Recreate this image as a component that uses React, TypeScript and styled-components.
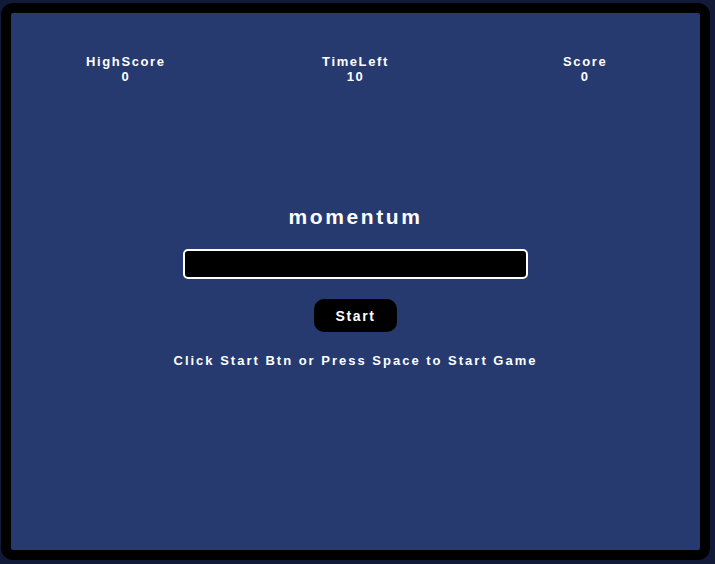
import React from "react";
import styled, { createGlobalStyle } from "styled-components";

const Global = createGlobalStyle`
  html, body {
    margin: 0;
    padding: 0;
    background: #111a38;
    height: 100%;
  }
  #root {
    height: 100%;
  }
`;

const Page = styled.div`
  box-sizing: border-box;
  height: 564px;
  padding: 3px 5px 4px 1px;
  font-family: "Liberation Sans", Arial, sans-serif;
  font-weight: bold;
  color: #ffffff;
`;

const Frame = styled.div`
  box-sizing: border-box;
  height: 100%;
  border: 10px solid #000000;
  border-radius: 12px;
  background: #263a70;
  display: flex;
  flex-direction: column;
`;

const Stats = styled.div`
  display: grid;
  grid-template-columns: repeat(3, 1fr);
  padding-top: 41px;
`;

const Stat = styled.div`
  display: flex;
  flex-direction: column;
  align-items: center;
  font-size: 13px;
  line-height: 15px;
  letter-spacing: 1.6px;
`;

const Main = styled.div`
  display: flex;
  flex-direction: column;
  align-items: center;
  padding-top: 121px;
`;

const Word = styled.div`
  font-size: 21px;
  line-height: 24px;
  letter-spacing: 2.6px;
`;

const WordInput = styled.input`
  box-sizing: border-box;
  width: 345px;
  height: 30px;
  margin-top: 20px;
  background: #000000;
  border: 2px solid #ffffff;
  border-radius: 5px;
  color: #ffffff;
  font: inherit;
  font-size: 16px;
  padding: 0 8px;
  outline: none;
`;

const StartButton = styled.button`
  box-sizing: border-box;
  width: 83px;
  height: 33px;
  margin-top: 20px;
  background: #000000;
  border: none;
  border-radius: 10px;
  color: #ffffff;
  font-family: inherit;
  font-weight: bold;
  font-size: 14px;
  letter-spacing: 1.6px;
  cursor: pointer;
`;

const Hint = styled.div`
  margin-top: 21px;
  font-size: 13px;
  line-height: 15px;
  letter-spacing: 2px;
`;

export default function App() {
  return (
    <>
      <Global />
      <Page>
        <Frame>
          <Stats>
            <Stat>
              <span>HighScore</span>
              <span>0</span>
            </Stat>
            <Stat>
              <span>TimeLeft</span>
              <span>10</span>
            </Stat>
            <Stat>
              <span>Score</span>
              <span>0</span>
            </Stat>
          </Stats>
          <Main>
            <Word>momentum</Word>
            <WordInput type="text" />
            <StartButton>Start</StartButton>
            <Hint>Click Start Btn or Press Space to Start Game</Hint>
          </Main>
        </Frame>
      </Page>
    </>
  );
}
